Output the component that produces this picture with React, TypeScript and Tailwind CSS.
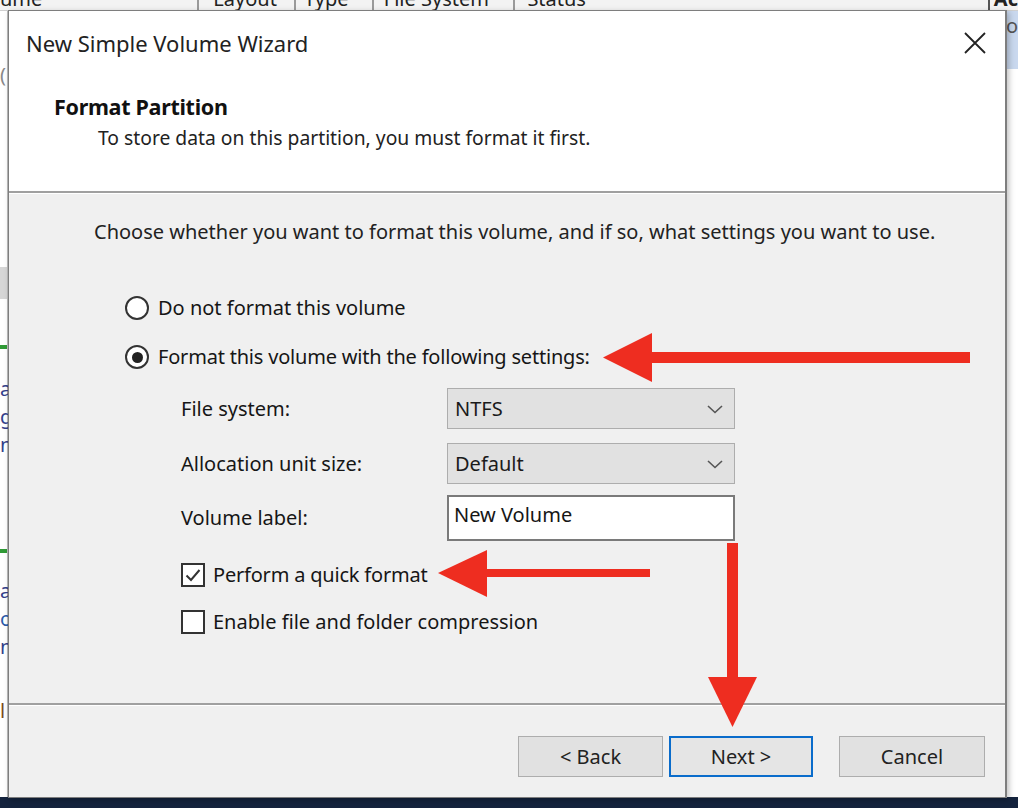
import React from "react";

const font = { fontFamily: '"Noto Sans", "Open Sans", sans-serif' };

function Radio({ checked }: { checked?: boolean }) {
  return (
    <span className="flex h-[24px] w-[24px] items-center justify-center rounded-full border-2 border-[#333333] bg-white">
      {checked && <span className="h-[11px] w-[11px] rounded-full bg-[#222222]" />}
    </span>
  );
}

function Check({ checked }: { checked?: boolean }) {
  return (
    <span className="flex h-[24px] w-[24px] items-center justify-center border-2 border-[#333333] bg-white">
      {checked && (
        <svg width="18" height="18" viewBox="0 0 18 18">
          <path d="M2.5 9.5 L7 14 L15.5 4" fill="none" stroke="#333" strokeWidth="2" />
        </svg>
      )}
    </span>
  );
}

function Select({ value }: { value: string }) {
  return (
    <div className="flex h-[41px] w-[288px] items-center justify-between border border-[#adadad] bg-[#e1e1e1] pl-[7px] pr-[10px] text-[20px] text-[#1a1a1a]">
      <span>{value}</span>
      <svg width="18" height="12" viewBox="0 0 18 12">
        <path d="M2 3 L9 9.5 L16 3" fill="none" stroke="#555" strokeWidth="1.6" />
      </svg>
    </div>
  );
}

export default function App() {
  return (
    <div className="relative h-[808px] w-[1018px] overflow-hidden bg-[#f0f0f0] text-[#1a1a1a]" style={font}>
      {/* background window */}
      <div className="flex h-full flex-col">
        <div className="flex h-[11px] overflow-hidden border-b border-[#cfcfcf] bg-[#f3f3f3] text-[20px] leading-[20px] text-[#222]">
          <div className="-mt-[11px] w-[200px] border-r-2 border-[#9a9a9a]">ume</div>
          <div className="-mt-[11px] w-[97px] border-r-2 border-[#9a9a9a] pl-[14px]">Layout</div>
          <div className="-mt-[11px] w-[78px] border-r-2 border-[#9a9a9a] pl-[8px]">Type</div>
          <div className="-mt-[11px] w-[142px] border-r-2 border-[#9a9a9a] pl-[10px]">File System</div>
          <div className="-mt-[11px] w-[476px] border-r-2 border-[#555] pl-[12px]">Status</div>
          <div className="-mt-[11px] pl-[4px] font-bold">Ac</div>
        </div>
        <div className="flex flex-1">
          <div className="flex w-[8px] flex-col border-r border-[#bbb] bg-white text-[20px] leading-[28px] text-[#33408a]">
            <div className="mt-[50px] h-[20px] text-[#888]">(</div>
            <div className="mt-[186px] h-[32px] bg-[#d6d6d6]" />
            <div className="mt-[46px] h-[4px] bg-[#2f9a35]" />
            <div className="mt-[26px]">a:</div>
            <div>g</div>
            <div>n</div>
            <div className="mt-[90px] h-[4px] bg-[#2f9a35]" />
            <div className="mt-[24px]">a:</div>
            <div className="text-[#2a5aa8]">o.</div>
            <div>n</div>
            <div className="mt-[36px] text-[#7a4a20]">l</div>
          </div>
          <div className="flex-1" />
          <div className="flex w-[12px] flex-col bg-white">
            <div className="h-[58px] bg-[#c9d8ee] text-[20px] text-[#555]">o</div>
          </div>
        </div>
        <div className="h-[11px] bg-[#14233d]" />
      </div>

      {/* dialog window */}
      <div className="absolute left-[8px] top-[10px] flex h-[788px] w-[999px] flex-col border border-[#7e7e7e] border-r-2 bg-[#f0f0f0] text-[#161616] shadow-[2px_2px_6px_rgba(0,0,0,0.25)]">
        {/* header */}
        <div className="flex h-[180px] flex-col bg-white">
          <div className="flex h-[64px] items-center justify-between pl-[17px] pr-[18px]">
            <span className="text-[22px] text-[#222]">New Simple Volume Wizard</span>
            <svg width="24" height="24" viewBox="0 0 24 24">
              <path d="M2 2 L22 22 M22 2 L2 22" stroke="#222" strokeWidth="1.8" />
            </svg>
          </div>
          <div className="mt-[18px] pl-[45px] text-[21.5px] font-bold leading-[28px] tracking-[-0.3px] text-[#111]">Format Partition</div>
          <div className="mt-[4px] pl-[89px] text-[19.3px] leading-[26px] text-[#222]">
            To store data on this partition, you must format it first.
          </div>
        </div>
        <div className="h-[2px] bg-[#a0a0a0]" />
        <div className="h-[1px] bg-white" />

        {/* body */}
        <div className="flex flex-1 flex-col pt-[24px]">
          <div className="pl-[85px] text-[20px] leading-[28px] text-[#222]">
            Choose whether you want to format this volume, and if so, what settings you want to use.
          </div>
          <div className="mt-[48px] flex h-[28px] items-center gap-[9px] pl-[116px] text-[20px]">
            <Radio />
            <span>Do not format this volume</span>
          </div>
          <div className="mt-[21px] flex h-[28px] items-center gap-[9px] pl-[116px] text-[20px] tracking-[-0.2px]">
            <Radio checked />
            <span>Format this volume with the following settings:</span>
          </div>
          <div className="mt-[17px] grid grid-cols-[266px_288px] gap-y-[14px] pl-[172px] text-[20px]">
            <div className="flex items-center">File system:</div>
            <Select value="NTFS" />
            <div className="flex items-center">Allocation unit size:</div>
            <Select value="Default" />
            <div className="-mt-[3px] flex items-center">Volume label:</div>
            <div className="-mt-[3px] flex h-[46px] w-[288px] items-start border-2 border-[#7a7a7a] bg-white pl-[5px] pt-[3px] text-[20px]">
              New Volume
            </div>
          </div>
          <div className="mt-[20px] flex h-[28px] items-center gap-[8px] pl-[172px] text-[20px] tracking-[-0.2px]">
            <Check checked />
            <span>Perform a quick format</span>
          </div>
          <div className="mt-[19px] flex h-[28px] items-center gap-[8px] pl-[172px] text-[20px]">
            <Check />
            <span>Enable file and folder compression</span>
          </div>
        </div>

        {/* footer */}
        <div className="h-[2px] bg-[#a0a0a0]" />
        <div className="h-[1px] bg-white" />
        <div className="flex h-[91px] justify-end pr-[20px] pt-[30px]">
          <button className="flex h-[41px] w-[145px] items-center justify-center border border-[#adadad] bg-[#e1e1e1] text-[20px] text-[#222]">
            &lt; Back
          </button>
          <button className="ml-[6px] flex h-[41px] w-[144px] items-center justify-center border-2 border-[#0a6ccb] bg-[#e5e5e5] text-[20px] text-[#222]">
            Next &gt;
          </button>
          <button className="ml-[26px] flex h-[41px] w-[146px] items-center justify-center border border-[#adadad] bg-[#e1e1e1] text-[20px] text-[#222]">
            Cancel
          </button>
        </div>
      </div>

      {/* annotation arrows */}
      <svg className="pointer-events-none absolute left-0 top-0" width="1018" height="808" viewBox="0 0 1018 808">
        <g fill="#ee2d20">
          <rect x="645" y="352" width="325" height="11" />
          <polygon points="603,357.5 652,333 652,382" />
          <rect x="480" y="569" width="170" height="8" />
          <polygon points="438,573 487,550 487,597" />
          <rect x="727" y="543" width="11" height="140" />
          <polygon points="732.5,727 708,677 757,677" />
        </g>
      </svg>
    </div>
  );
}
